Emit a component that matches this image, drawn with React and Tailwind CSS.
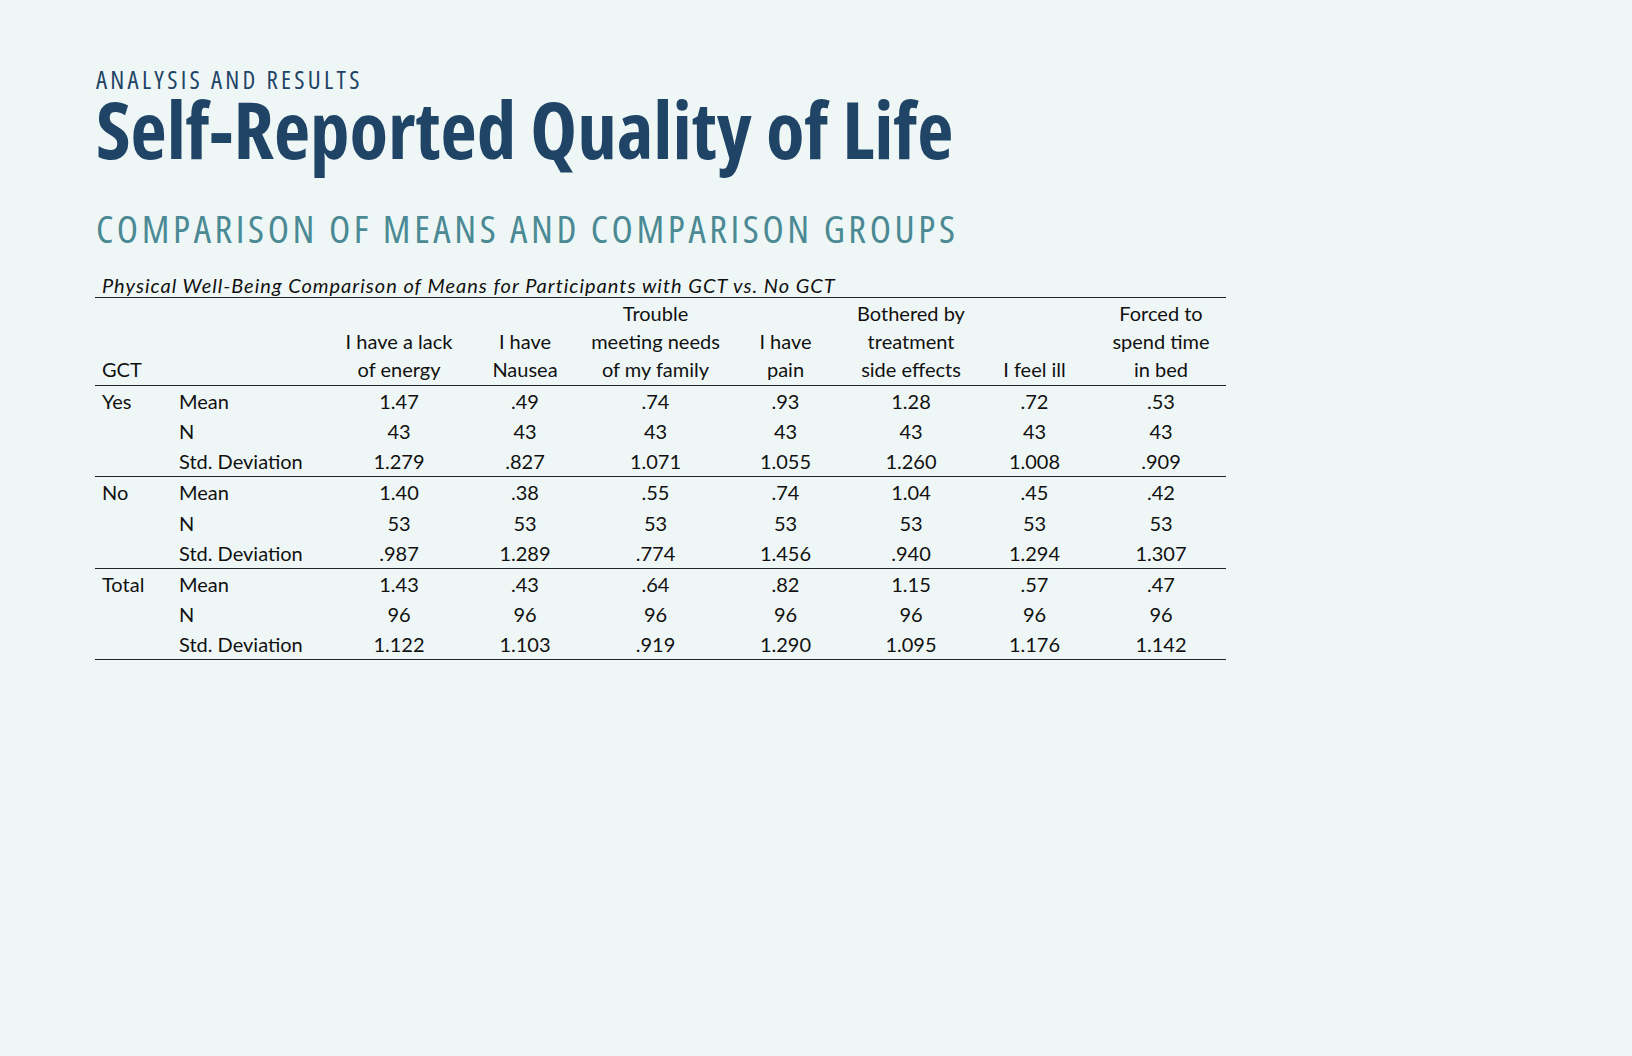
import React from 'react';

const columns = [
  ['I have a lack', 'of energy'],
  ['I have', 'Nausea'],
  ['Trouble', 'meeting needs', 'of my family'],
  ['I have', 'pain'],
  ['Bothered by', 'treatment', 'side effects'],
  ['I feel ill'],
  ['Forced to', 'spend time', 'in bed'],
];

const groups = [
  {
    name: 'Yes',
    rows: [
      ['Mean', '1.47', '.49', '.74', '.93', '1.28', '.72', '.53'],
      ['N', '43', '43', '43', '43', '43', '43', '43'],
      ['Std. Deviation', '1.279', '.827', '1.071', '1.055', '1.260', '1.008', '.909'],
    ],
  },
  {
    name: 'No',
    rows: [
      ['Mean', '1.40', '.38', '.55', '.74', '1.04', '.45', '.42'],
      ['N', '53', '53', '53', '53', '53', '53', '53'],
      ['Std. Deviation', '.987', '1.289', '.774', '1.456', '.940', '1.294', '1.307'],
    ],
  },
  {
    name: 'Total',
    rows: [
      ['Mean', '1.43', '.43', '.64', '.82', '1.15', '.57', '.47'],
      ['N', '96', '96', '96', '96', '96', '96', '96'],
      ['Std. Deviation', '1.122', '1.103', '.919', '1.290', '1.095', '1.176', '1.142'],
    ],
  },
];

const App = () => {
  return (
    <div className="min-h-screen w-full bg-[#eff7f6] pl-[96px] pt-[65px]">
      {/* headings: condensed Open Sans stands in for the DIN-style face */}
      <p className="font-['Open_Sans',sans-serif] font-stretch-[75%] text-[25px] font-medium leading-[28px] tracking-[0.13em] text-[#1f4466]">
        ANALYSIS AND RESULTS
      </p>
      <h1 className="font-['Open_Sans',sans-serif] font-stretch-[75%] text-[79px] font-bold leading-[72px] text-[#1f4466]">
        Self-Reported Quality of Life
      </h1>
      <h2 className="mt-[41px] font-['Open_Sans',sans-serif] font-stretch-[75%] text-[39px] font-normal leading-[44px] tracking-[0.092em] text-[#4b8a94]">
        COMPARISON OF MEANS AND COMPARISON GROUPS
      </h2>

      <div className="-ml-px mt-[23px] w-[1131px] font-['Lato',sans-serif] text-[20px] text-[#111]">
        <p className="pl-[7px] italic leading-[24px] tracking-[0.05em]">
          Physical Well-Being Comparison of Means for Participants with GCT vs. No GCT
        </p>
        <table className="w-[1131px] table-fixed border-collapse border-t border-[#222]">
          <colgroup>
            <col className="w-[77px]" />
            <col className="w-[165px]" />
            <col className="w-[124px]" />
            <col className="w-[128px]" />
            <col className="w-[133px]" />
            <col className="w-[127px]" />
            <col className="w-[124px]" />
            <col className="w-[123px]" />
            <col className="w-[130px]" />
          </colgroup>
          <thead className="border-b border-[#222]">
            <tr>
              <th className="pl-[7px] pt-px pb-[2px] text-left align-bottom font-normal leading-[28px]">GCT</th>
              <th />
              {columns.map((lines, i) => (
                <th key={i} className="pt-px pb-[2px] text-center align-bottom font-normal leading-[28px]">
                  {lines.map((l, j) => (
                    <div key={j}>{l}</div>
                  ))}
                </th>
              ))}
            </tr>
          </thead>
          {groups.map((g) => (
            <tbody key={g.name} className="border-b border-[#222]">
              {g.rows.map((r, i) => (
                <tr key={i} className="h-[30.4px]">
                  <td className="pl-[7px] leading-[30px]">{i === 0 ? g.name : ''}</td>
                  <td className="pl-[7px] leading-[30px]">{r[0]}</td>
                  {r.slice(1).map((v, j) => (
                    <td key={j} className="text-center leading-[30px]">{v}</td>
                  ))}
                </tr>
              ))}
            </tbody>
          ))}
        </table>
      </div>
    </div>
  );
};

export default App;
